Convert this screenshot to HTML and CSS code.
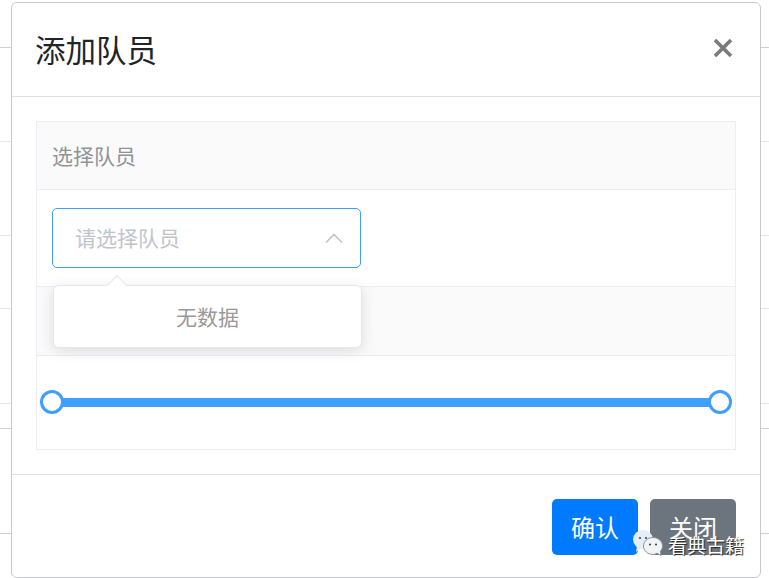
FILE: index.html
```html
<!DOCTYPE html>
<html lang="zh-CN">
<head>
    <meta charset="UTF-8">
    <title>添加队员</title>
    <link rel="stylesheet" href="styles.css">
</head>
<body>

<!-- table behind the dialog, only the row lines show -->
<div class="page-rows">
    <div class="page-row page-row-dark"></div>
    <div class="page-row"></div>
    <div class="page-row"></div>
    <div class="page-row"></div>
    <div class="page-row"></div>
    <div class="page-row page-row-dark"></div>
    <div class="page-row page-row-dark"></div>
</div>

<div class="modal">
    <div class="modal-header">
        <h1>添加队员</h1>
        <svg class="close" viewBox="0 0 20 20" aria-label="关闭">
            <path d="M2 2 18 18M18 2 2 18"/>
        </svg>
    </div>

    <div class="modal-body">
        <div class="card">
            <div class="card-header">选择队员</div>
            <div class="card-content select-content">
                <div class="select">
                    <span>请选择队员</span>
                    <svg class="select-arrow" viewBox="0 0 18 10"><path d="M1 9.5 9 1.5 17 9.5"/></svg>
                </div>
                <div class="dropdown">
                    <div class="dropdown-arrow"></div>
                    无数据
                </div>
            </div>
            <!-- this header's label is covered by the dropdown -->
            <div class="card-header card-header-tall"></div>
            <div class="card-content slider-content">
                <div class="slider">
                    <span class="handle"></span>
                    <span class="handle"></span>
                </div>
            </div>
        </div>
    </div>

    <div class="modal-footer">
        <button class="btn btn-primary">确认</button>
        <button class="btn btn-secondary">关闭</button>
    </div>
</div>

<div class="watermark">
    <svg class="wechat" viewBox="0 0 32 26">
        <ellipse class="bubble-back" cx="11" cy="9.5" rx="10" ry="9.5"/>
        <path class="bubble-back" d="M5 16 4 22 10 18Z"/>
        <circle class="eye" cx="8" cy="8" r="1.1"/>
        <circle class="eye" cx="14" cy="8" r="1.1"/>
        <path class="bubble-front" d="M21 7.5C26.2 7.5 30.5 11.3 30.5 16 30.5 18 29.7 19.8 28.4 21.2L29 25.5 25 23.2C23.8 23.9 22.4 24.5 21 24.5 15.8 24.5 11.5 20.7 11.5 16S15.8 7.5 21 7.5Z"/>
        <circle class="eye" cx="18" cy="14.5" r="1.1"/>
        <circle class="eye" cx="24" cy="14.5" r="1.1"/>
    </svg>
    <span>看典古籍</span>
</div>

</body>
</html>
```

FILE: styles.css
```css
html, body {
    height: 100%;
}
body {
    margin: 0;
    overflow: hidden;
    position: relative;
    background-color: #fff;
    font-family: "Noto Sans CJK SC", "Noto Sans", sans-serif;
}
.page-rows {
    display: grid;
    grid-template-rows: 48px 94px 94px 73px 95px 25px 105px;
}
.page-row {
    border-bottom: 1px solid #e6e6e6;
}
.page-row-dark {
    border-bottom-color: #cfcfcf;
}

/* Dialog */
.modal {
    position: absolute;
    left: 11px;
    top: 2px;
    width: 750px;
    height: 576px;
    box-sizing: border-box;
    display: flex;
    flex-direction: column;
    background-color: #fff;
    border: 1px solid #c8c9cc;
    border-radius: 6px;
}
.modal-header {
    height: 93px;
    flex: none;
    display: flex;
    align-items: center;
    justify-content: space-between;
    padding: 0 27px 0 23px;
    border-bottom: 1px solid #dee2e6;
}
.modal-header h1 {
    margin: 0 0 2px;
    font-size: 30.5px;
    font-weight: 400;
    color: #212529;
}
.close {
    width: 20px;
    height: 20px;
    margin-bottom: 3px;
}
.close path {
    fill: none;
    stroke: #7a7a7a;
    stroke-width: 3.6;
}
.modal-body {
    flex: none;
    padding: 24px;
}
.modal-footer {
    flex: 1;
    display: flex;
    justify-content: flex-end;
    align-items: flex-start;
    gap: 12px;
    padding: 24px 24px 0 0;
    border-top: 1px solid #dee2e6;
}

/* Card */
.card {
    border: 1px solid #ebeef5;
}
.card-header {
    height: 67px;
    padding-left: 15px;
    line-height: 66px;
    font-size: 21px;
    color: #909399;
    background-color: #fafafa;
    border-bottom: 1px solid #ebeef5;
}
.card-header-tall {
    height: 68px;
}
.card-content {
    position: relative;
}
.select-content {
    height: 97px;
    border-bottom: 1px solid #ebeef5;
    box-sizing: border-box;
    padding: 18px 15px 0;
}
.select {
    width: 309px;
    height: 60px;
    box-sizing: border-box;
    display: flex;
    align-items: center;
    justify-content: space-between;
    padding: 0 17px 2px 22px;
    font-size: 21px;
    color: #c0c4cc;
    border: 1px solid #409eff;
    border-radius: 5px;
}
.select-arrow {
    width: 18px;
    height: 10px;
    margin-top: 2px;
}
.select-arrow path {
    fill: none;
    stroke: #c0c4cc;
    stroke-width: 1.6;
}
.dropdown {
    position: absolute;
    left: 16px;
    top: 95px;
    width: 309px;
    height: 63px;
    box-sizing: border-box;
    line-height: 60px;
    text-align: center;
    font-size: 21px;
    color: #999;
    background-color: #fff;
    border: 1px solid #e4e7ed;
    border-radius: 6px;
    box-shadow: 0 3px 14px rgba(0, 0, 0, 0.12);
}
.dropdown-arrow {
    position: absolute;
    left: 56px;
    top: -8px;
    width: 14px;
    height: 14px;
    box-sizing: border-box;
    transform: rotate(45deg);
    background-color: #fff;
    border-top: 1px solid #e4e7ed;
    border-left: 1px solid #e4e7ed;
}
.slider-content {
    height: 93px;
    padding: 33px 15px 0;
    box-sizing: border-box;
}
.slider {
    height: 9px;
    margin-top: 9px;
    display: flex;
    justify-content: space-between;
    align-items: center;
    background-color: #409eff;
}
.handle {
    width: 24px;
    height: 24px;
    box-sizing: border-box;
    margin: -1px -12px 0;
    background-color: #fff;
    border: 3px solid #409eff;
    border-radius: 50%;
}

/* Buttons */
.btn {
    width: 86px;
    height: 56px;
    padding: 0 0 2px;
    font-family: inherit;
    font-size: 24px;
    color: #fff;
    border: none;
    border-radius: 5px;
}
.btn-primary {
    background-color: #007bff;
}
.btn-secondary {
    background-color: #6c757d;
}

/* Image watermark in the corner */
.watermark {
    position: absolute;
    left: 632px;
    top: 530px;
    display: flex;
    align-items: center;
    gap: 4px;
    font-size: 19px;
    color: #fff;
    text-shadow: 1px 1px 1px #222;
}
.wechat {
    width: 32px;
    height: 26px;
    margin-bottom: 2px;
}
.bubble-back {
    fill: #e4eefa;
}
.bubble-front {
    fill: #f2f3f5;
    stroke: #8d9299;
    stroke-width: 1;
}
.eye {
    fill: #3a4a5a;
}
```
